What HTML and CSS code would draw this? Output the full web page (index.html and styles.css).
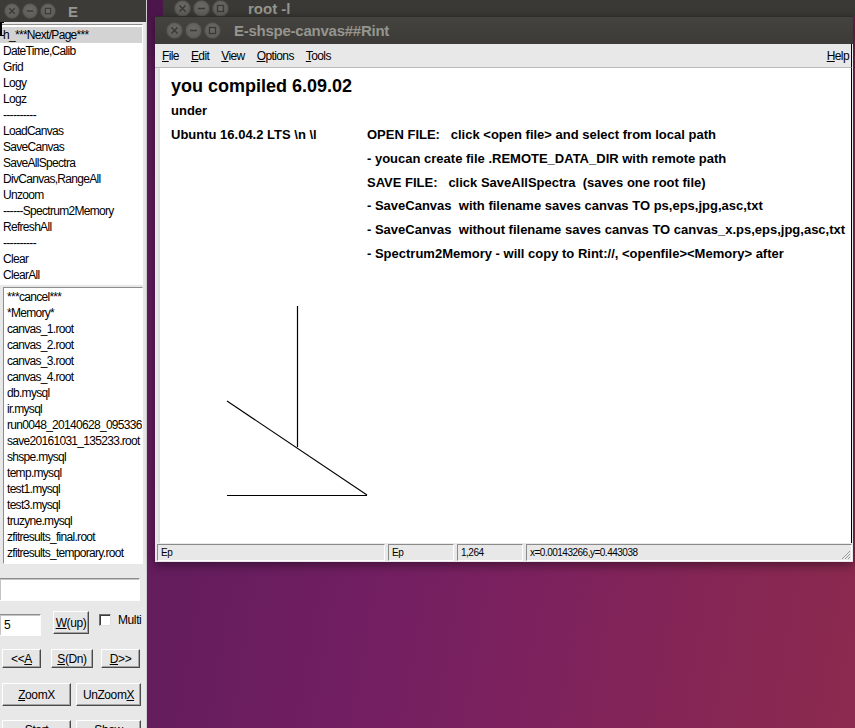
FILE: index.html
```html
<!DOCTYPE html>
<html>
<head>
<meta charset="utf-8">
<title>E-shspe-canvas##Rint</title>
<link rel="stylesheet" href="styles.css">
</head>
<body>
<div class="win win-root">
  <div class="titlebar tb-root">
    <span class="wb"><svg width="9" height="9" viewBox="0 0 9 9"><path d="M1.5 1.5 L7.5 7.5 M7.5 1.5 L1.5 7.5" stroke="#3a3935" stroke-width="1.6"/></svg></span>
    <span class="wb"><svg width="9" height="9" viewBox="0 0 9 9"><path d="M1 4.5 H8" stroke="#3a3935" stroke-width="1.6"/></svg></span>
    <span class="wb"><svg width="9" height="9" viewBox="0 0 9 9"><rect x="1.5" y="1.5" width="6" height="6" fill="none" stroke="#3a3935" stroke-width="1.3"/></svg></span>
    <span class="wtitle root-title">root -l</span>
  </div>
</div>

<div class="win win-left">
  <div class="titlebar tb-left">
    <span class="wb wb-s"><svg width="8" height="8" viewBox="0 0 9 9"><path d="M1.5 1.5 L7.5 7.5 M7.5 1.5 L1.5 7.5" stroke="#3a3935" stroke-width="1.6"/></svg></span>
    <span class="wb wb-s"><svg width="8" height="8" viewBox="0 0 9 9"><path d="M1 4.5 H8" stroke="#3a3935" stroke-width="1.6"/></svg></span>
    <span class="wb wb-s"><svg width="8" height="8" viewBox="0 0 9 9"><rect x="1.5" y="1.5" width="6" height="6" fill="none" stroke="#3a3935" stroke-width="1.3"/></svg></span>
    <span class="wtitle left-title">E</span>
  </div>
  <div class="left-body">
    <ul class="listbox list-menu">
      <li class="sel">h_***Next/Page***</li>
      <li>DateTime,Calib</li>
      <li>Grid</li>
      <li>Logy</li>
      <li>Logz</li>
      <li>----------</li>
      <li>LoadCanvas</li>
      <li>SaveCanvas</li>
      <li>SaveAllSpectra</li>
      <li>DivCanvas,RangeAll</li>
      <li>Unzoom</li>
      <li>------Spectrum2Memory</li>
      <li>RefreshAll</li>
      <li>----------</li>
      <li>Clear</li>
      <li>ClearAll</li>
    </ul>
    <ul class="listbox list-files">
      <li>***cancel***</li>
      <li>*Memory*</li>
      <li>canvas_1.root</li>
      <li>canvas_2.root</li>
      <li>canvas_3.root</li>
      <li>canvas_4.root</li>
      <li>db.mysql</li>
      <li>ir.mysql</li>
      <li>run0048_20140628_095336</li>
      <li>save20161031_135233.root</li>
      <li>shspe.mysql</li>
      <li>temp.mysql</li>
      <li>test1.mysql</li>
      <li>test3.mysql</li>
      <li>truzyne.mysql</li>
      <li>zfitresults_final.root</li>
      <li>zfitresults_temporary.root</li>
    </ul>
    <div class="field field-wide"></div>
    <div class="row row1">
      <div class="field field-num">5</div>
      <div class="btn btn-w"><span><u>W</u>(up)</span></div>
      <div class="check"></div>
      <span class="multi">Multi</span>
    </div>
    <div class="row row2">
      <div class="btn btn-a">&lt;&lt;<u>A</u></div>
      <div class="btn btn-s"><u>S</u>(Dn)</div>
      <div class="btn btn-d"><u>D</u>&gt;&gt;</div>
    </div>
    <div class="row row3">
      <div class="btn btn-zoom"><u>Z</u>oomX</div>
      <div class="btn btn-unzoom">UnZoom<u>X</u></div>
    </div>
    <div class="row row4">
      <div class="btn btn-zoom">Start</div>
      <div class="btn btn-unzoom">Show</div>
    </div>
  </div>
  <span class="cursor"></span>
</div>

<div class="win win-main">
  <div class="titlebar tb-main">
    <span class="wb"><svg width="9" height="9" viewBox="0 0 9 9"><path d="M1.5 1.5 L7.5 7.5 M7.5 1.5 L1.5 7.5" stroke="#3a3935" stroke-width="1.6"/></svg></span>
    <span class="wb"><svg width="9" height="9" viewBox="0 0 9 9"><path d="M1 4.5 H8" stroke="#3a3935" stroke-width="1.6"/></svg></span>
    <span class="wb"><svg width="9" height="9" viewBox="0 0 9 9"><rect x="1.5" y="1.5" width="6" height="6" fill="none" stroke="#3a3935" stroke-width="1.3"/></svg></span>
    <span class="wtitle main-title">E-shspe-canvas##Rint</span>
  </div>
  <div class="menubar">
    <span><u>F</u>ile</span>
    <span><u>E</u>dit</span>
    <span><u>V</u>iew</span>
    <span><u>O</u>ptions</span>
    <span><u>T</u>ools</span>
    <span class="help"><u>H</u>elp</span>
  </div>
  <div class="canvas">
    <svg class="drawing" width="691" height="475" viewBox="0 0 691 475">
      <path d="M137.5 238 V379" stroke="#000" stroke-width="1.2" fill="none"/>
      <path d="M67 333 L207 427" stroke="#000" stroke-width="1.1" fill="none"/>
      <path d="M67 427.5 H207" stroke="#000" stroke-width="1.2" fill="none"/>
    </svg>
    <div class="t-big">you compiled 6.09.02</div>
    <div class="t-line">under</div>
    <div class="info">
      <div class="col-left">Ubuntu 16.04.2 LTS \n \l</div>
      <div class="col-right">
        <div class="ln">OPEN FILE:   click &lt;open file&gt; and select from local path</div>
        <div class="ln">- youcan create file .REMOTE_DATA_DIR with remote path</div>
        <div class="ln">SAVE FILE:   click SaveAllSpectra  (saves one root file)</div>
        <div class="ln">- SaveCanvas  with filename saves canvas TO ps,eps,jpg,asc,txt</div>
        <div class="ln">- SaveCanvas  without filename saves canvas TO canvas_x.ps,eps,jpg,asc,txt</div>
        <div class="ln">- Spectrum2Memory - will copy to Rint://, &lt;openfile&gt;&lt;Memory&gt; after</div>
      </div>
    </div>
  </div>
  <div class="statusbar">
    <div class="sfield sf1">Ep</div>
    <div class="sfield sf2">Ep</div>
    <div class="sfield sf3">1,264</div>
    <div class="sfield sf4">x=0.00143266,y=0.443038</div>
    <svg class="grip" width="11" height="11" viewBox="0 0 11 11">
      <path d="M10 2 L2 10 M10 5 L5 10 M10 8 L8 10" stroke="#9a9a9a" stroke-width="1"/>
    </svg>
  </div>
</div>
</body>
</html>
```

FILE: styles.css
```css
* { box-sizing: border-box; }
html, body { margin: 0; padding: 0; }
body {
  width: 855px;
  height: 728px;
  overflow: hidden;
  position: relative;
  font-family: "Liberation Sans", Arial, sans-serif;
  color: #000;
  background:
    linear-gradient(180deg, rgba(40,10,40,0.35) 0%, rgba(40,10,40,0) 12%),
    linear-gradient(100deg, #561a58 0%, #661d5e 30%, #731f62 50%, #7e225d 68%, #862654 85%, #8c2a4e 100%);
}
ul { list-style: none; margin: 0; padding: 0; }
u { text-decoration: underline; text-underline-offset: 1px; }

.win { position: absolute; }

/* title bars */
.titlebar {
  display: flex;
  align-items: center;
  background: #3c3b37;
  overflow: hidden;
}
.wb {
  width: 17px;
  height: 17px;
  border-radius: 50%;
  background: radial-gradient(circle at 50% 40%, #6b6a66, #595854);
  border: 1px solid #4b4a46;
  display: flex;
  align-items: center;
  justify-content: center;
  margin-right: 2px;
  flex: none;
}
.wb-s { width: 16px; height: 16px; }
.wtitle {
  font-weight: bold;
  font-size: 15px;
  color: #96958f;
  white-space: nowrap;
}

.win-root { left: 163px; top: 0; width: 692px; height: 16px; }
.tb-root { height: 16px; padding-left: 11px; background: #3a3935; }
.root-title { margin-left: 17px; }

/* left window */
.win-left {
  left: 0;
  top: 0;
  width: 147px;
  height: 728px;
  background: #e8e8e8;
  border-right: 1px solid #cfcfcf;
}
.tb-left { height: 22px; padding-left: 4px; }
.left-title { margin-left: 10px; }
.left-body { display: flex; flex-direction: column; }

.listbox {
  background: #fff;
  border: 1px solid;
  border-color: #8d8d8d #fdfdfd #fdfdfd #8d8d8d;
  font-size: 12px;
  letter-spacing: -0.7px;
}
.listbox li {
  height: 16px;
  line-height: 16px;
  padding-left: 3px;
  white-space: nowrap;
  overflow: hidden;
}
.listbox li.sel { background: #d3d3d3; }
.list-menu {
  margin-top: 2px;
  margin-left: -1px;
  width: 144px;
  height: 261px;
  padding-top: 2px;
}
.list-files {
  margin-top: 2px;
  margin-left: 3px;
  width: 140px;
  height: 277px;
  padding-top: 1px;
}
.list-files li { padding-left: 3px; }

.field {
  background: #fff;
  border: 1px solid;
  border-color: #8d8d8d #fdfdfd #fdfdfd #8d8d8d;
  box-shadow: inset 1px 1px 0 #c4c4c4;
  font-size: 12px;
}
.field-wide { margin-top: 14px; width: 141px; height: 23px; margin-left: -1px; }

.row { display: flex; align-items: flex-start; font-size: 12px; letter-spacing: -0.4px; }
.row1 { margin-top: 10px; height: 25px; }
.row2 { margin-top: 13px; height: 20px; }
.row3 { margin-top: 14px; height: 23px; }
.row4 { margin-top: 14px; height: 23px; }

.field-num {
  margin-top: 3px;
  margin-left: -1px;
  width: 42px;
  height: 22px;
  line-height: 20px;
  padding-left: 4px;
}

.btn {
  display: flex;
  align-items: center;
  justify-content: center;
  background: #e6e6e6;
  border: 1px solid;
  border-color: #ffffff #4a4a4a #4a4a4a #ffffff;
  box-shadow: inset -1px -1px 0 #a3a3a3;
  white-space: nowrap;
  flex: none;
}
.btn-w { margin-left: 12px; width: 36px; height: 23px; }
.check {
  margin-left: 10px;
  margin-top: 3px;
  width: 12px;
  height: 12px;
  background: #fff;
  border: 1px solid;
  border-color: #6f6f6f #e0e0e0 #e0e0e0 #6f6f6f;
  box-shadow: inset 1px 1px 0 #3a3a3a;
}
.multi { margin-left: 7px; margin-top: 2px; }

.btn-a { margin-left: 2px; width: 39px; height: 19px; }
.btn-s { margin-left: 10px; width: 42px; height: 19px; }
.btn-d { margin-left: 8px; width: 39px; height: 19px; }

.btn-zoom { margin-left: 2px; width: 69px; height: 23px; }
.btn-unzoom { margin-left: 5px; width: 65px; height: 23px; }
.row4 .btn { align-items: flex-start; padding-top: 2px; }

.cursor {
  position: absolute;
  left: 0;
  top: 22px;
  width: 4px;
  height: 14px;
  border-left: 2px solid #000;
  border-top: 1px solid #000;
  border-bottom: 1px solid #000;
}

/* main window */
.win-main {
  left: 155px;
  top: 16px;
  width: 698px;
  height: 546px;
  background: #e8e8e8;
  box-shadow: 0 3px 10px rgba(0,0,0,0.45);
  display: flex;
  flex-direction: column;
}
.tb-main {
  height: 28px;
  flex: none;
  padding-left: 11px;
  background: linear-gradient(#44433f, #3c3b37);
  border-top: 1px solid #2e2d2a;
}
.main-title { margin-left: 11px; letter-spacing: -0.25px; }

.menubar {
  height: 24px;
  flex: none;
  display: flex;
  align-items: center;
  padding-left: 7px;
  padding-right: 2px;
  gap: 12px;
  font-size: 12px;
  letter-spacing: -0.6px;
  border-bottom: 1px solid #b9b9b9;
  border-right: 1px solid #000;
  margin-right: 1px;
}
.menubar .help { margin-left: auto; }

.canvas {
  position: relative;
  height: 475px;
  flex: none;
  margin-left: 3px;
  margin-right: 1px;
  background: #fff;
  border-left: 2px solid #dedede;
  border-right: 1px solid #000;
  padding: 6px 0 0 11px;
  font-weight: bold;
  overflow: hidden;
}
.drawing { position: absolute; left: 0; top: 0; }
.t-big { font-size: 18px; line-height: 25px; white-space: pre; }
.t-line { font-size: 13px; line-height: 24px; white-space: pre; }
.info {
  display: grid;
  grid-template-columns: 196px auto;
  font-size: 13px;
  line-height: 23.8px;
}
.col-left, .ln { white-space: pre; }

.statusbar {
  position: relative;
  height: 19px;
  flex: none;
  display: flex;
  align-items: center;
  padding-left: 2px;
  gap: 3px;
  font-size: 10px;
  letter-spacing: -0.5px;
}
.sfield {
  height: 17px;
  line-height: 15px;
  padding-left: 3px;
  border: 1px solid;
  border-color: #8a8a8a #ffffff #ffffff #8a8a8a;
  white-space: nowrap;
  overflow: hidden;
}
.sf1 { width: 228px; }
.sf2 { width: 66px; }
.sf3 { width: 66px; }
.sf4 { flex: 1; margin-right: 1px; }
.grip { position: absolute; right: 2px; bottom: 2px; }
```
